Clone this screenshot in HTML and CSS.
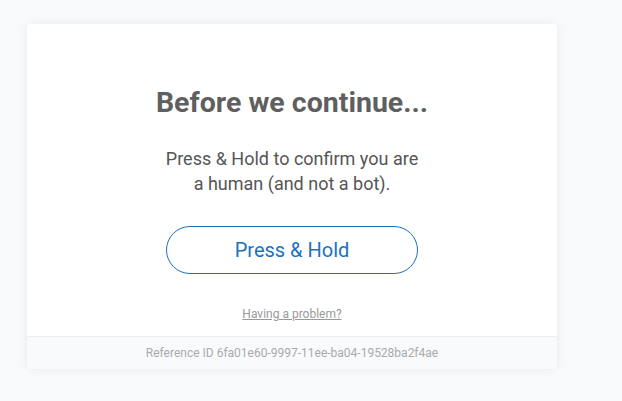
FILE: index.html
```html
<!DOCTYPE html>
<html lang="en">
<head>
<meta charset="utf-8">
<title>Before we continue...</title>
<link rel="stylesheet" href="styles.css">
</head>
<body>
<div class="card">
  <div class="main">
    <h1 class="title">Before we continue...</h1>
    <p class="text">Press &amp; Hold to confirm you are<br>a human (and not a bot).</p>
    <button class="hold">Press &amp; Hold</button>
    <a class="problem" href="#">Having a problem?</a>
  </div>
  <div class="footer">Reference ID 6fa01e60-9997-11ee-ba04-19528ba2f4ae</div>
</div>
</body>
</html>
```
FILE: styles.css
```css
html, body {
  margin: 0;
  padding: 0;
}
body {
  background: #f9fafc;
  font-family: Roboto, "Liberation Sans", sans-serif;
  height: 401px;
  overflow: hidden;
}
.card {
  width: 530px;
  margin: 24px 0 0 27px;
  background: #fff;
  border-radius: 4px;
  box-shadow: 0 0 12px rgba(0, 0, 0, 0.07);
  overflow: hidden;
}
.main {
  display: flex;
  flex-direction: column;
  align-items: center;
  padding: 62px 0 14px;
}
.title {
  margin: 0;
  font-size: 28.5px;
  line-height: 34px;
  font-weight: 700;
  color: #5f5f5f;
}
.text {
  margin: 26px 0 0;
  font-size: 18px;
  line-height: 25px;
  color: #555;
  text-align: center;
}
.hold {
  margin-top: 30px;
  width: 252px;
  height: 48px;
  border: 1px solid #1a72bd;
  border-radius: 24px;
  background: #fff;
  color: #1a72bd;
  font-family: inherit;
  font-size: 20px;
}
.problem {
  margin-top: 33px;
  font-size: 12px;
  line-height: 15px;
  color: #999;
  text-decoration: underline;
}
.footer {
  border-top: 1px solid #ededf0;
  background: #f9fafc;
  height: 32px;
  display: flex;
  align-items: center;
  justify-content: center;
  font-size: 12px;
  color: #aaa;
}
```
